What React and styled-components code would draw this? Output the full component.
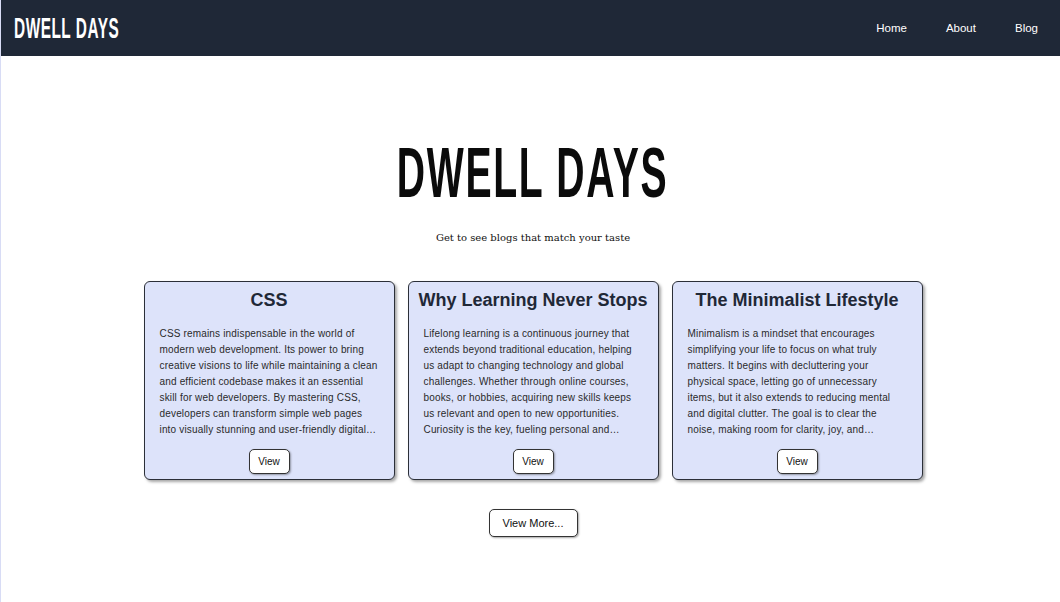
import React from 'react';
import styled, { createGlobalStyle } from 'styled-components';

const GlobalStyle = createGlobalStyle`
    html, body {
        margin: 0;
        padding: 0;
        background: #ffffff;
    }
    body {
        font-family: "Liberation Sans", Arial, sans-serif;
        border-left: 1px solid #d8dcf5;
        min-height: 100vh;
    }
`;

const Header = styled.header`
    height: 56px;
    background: #1f2837;
    display: flex;
    align-items: center;
    justify-content: space-between;
    padding: 0 0 0 13px;
`;

const Logo = styled.div`
    display: inline-block;
    color: #ffffff;
    font-family: "Liberation Sans", Arial, sans-serif;
    font-weight: 700;
    font-size: 29px;
    line-height: 1;
    letter-spacing: 1px;
    transform: scaleX(0.53);
    transform-origin: left center;
    white-space: nowrap;
`;

const Nav = styled.nav`
    display: flex;
    align-items: center;
    gap: 39px;
    padding-right: 22px;
`;

const NavLink = styled.a`
    color: #ffffff;
    font-size: 11.5px;
    text-decoration: none;
    cursor: pointer;
`;

const Main = styled.main`
    display: flex;
    flex-direction: column;
    align-items: center;
    padding: 79px 0 0 5px;
`;

const HeroTitle = styled.h1`
    margin: 0;
    font-family: "Liberation Sans", Arial, sans-serif;
    font-weight: 700;
    font-size: 70px;
    line-height: 76px;
    color: #0b0b0b;
    letter-spacing: 3px;
    white-space: nowrap;
    transform: scaleX(0.56);
`;

const Subtitle = styled.p`
    margin: 20px 0 0;
    font-family: "DejaVu Serif", "Liberation Serif", serif;
    font-size: 10px;
    line-height: 14px;
    color: #111;
`;

const Cards = styled.div`
    display: flex;
    gap: 13px;
    margin-top: 36px;
`;

const Card = styled.article`
    width: 251px;
    height: 199px;
    box-sizing: border-box;
    background: #dde3fa;
    border: 1px solid #2b2f38;
    border-radius: 6px;
    box-shadow: 2px 2px 3px rgba(0, 0, 0, 0.35);
    display: flex;
    flex-direction: column;
    align-items: center;
`;

const CardTitle = styled.h2`
    margin: 7px 0 0;
    font-size: 18px;
    line-height: 22px;
    font-weight: 700;
    color: #1f2837;
    text-align: center;
    white-space: nowrap;
`;

const CardText = styled.p`
    margin: 15px 0 0;
    padding: 0 15px;
    font-size: 10px;
    line-height: 16px;
    letter-spacing: 0.17px;
    color: #2a2a2a;
    display: -webkit-box;
    -webkit-line-clamp: 7;
    -webkit-box-orient: vertical;
    overflow: hidden;
`;

const Button = styled.button`
    background: #ffffff;
    border: 1px solid #333;
    border-radius: 5px;
    box-shadow: 1px 1px 2px rgba(0, 0, 0, 0.35);
    font-family: "Liberation Sans", Arial, sans-serif;
    color: #111;
    cursor: pointer;
    font-size: ${props => (props.$large ? '11px' : '10px')};
    width: ${props => (props.$large ? '89px' : '41px')};
    height: ${props => (props.$large ? '28px' : '25px')};
    margin-top: ${props => (props.$large ? '29px' : '11px')};
    padding: 0;
`;

const posts = [
    {
        title: 'CSS',
        text: 'CSS remains indispensable in the world of modern web development. Its power to bring creative visions to life while maintaining a clean and efficient codebase makes it an essential skill for web developers. By mastering CSS, developers can transform simple web pages into visually stunning and user-friendly digital experiences that delight every visitor.',
    },
    {
        title: 'Why Learning Never Stops',
        text: 'Lifelong learning is a continuous journey that extends beyond traditional education, helping us adapt to changing technology and global challenges. Whether through online courses, books, or hobbies, acquiring new skills keeps us relevant and open to new opportunities. Curiosity is the key, fueling personal and professional growth every day.',
    },
    {
        title: 'The Minimalist Lifestyle',
        text: 'Minimalism is a mindset that encourages simplifying your life to focus on what truly matters. It begins with decluttering your physical space, letting go of unnecessary items, but it also extends to reducing mental and digital clutter. The goal is to clear the noise, making room for clarity, joy, and meaningful experiences in everyday life.',
    },
];

const App = () => {
    return (
        <>
            <GlobalStyle />
            <Header>
                <Logo>DWELL DAYS</Logo>
                <Nav>
                    <NavLink>Home</NavLink>
                    <NavLink>About</NavLink>
                    <NavLink>Blog</NavLink>
                </Nav>
            </Header>
            <Main>
                <HeroTitle>DWELL DAYS</HeroTitle>
                <Subtitle>Get to see blogs that match your taste</Subtitle>
                <Cards>
                    {posts.map((post, index) => (
                        <Card key={index}>
                            <CardTitle>{post.title}</CardTitle>
                            <CardText>{post.text}</CardText>
                            <Button>View</Button>
                        </Card>
                    ))}
                </Cards>
                <Button $large>View More...</Button>
            </Main>
        </>
    );
};

export default App;
